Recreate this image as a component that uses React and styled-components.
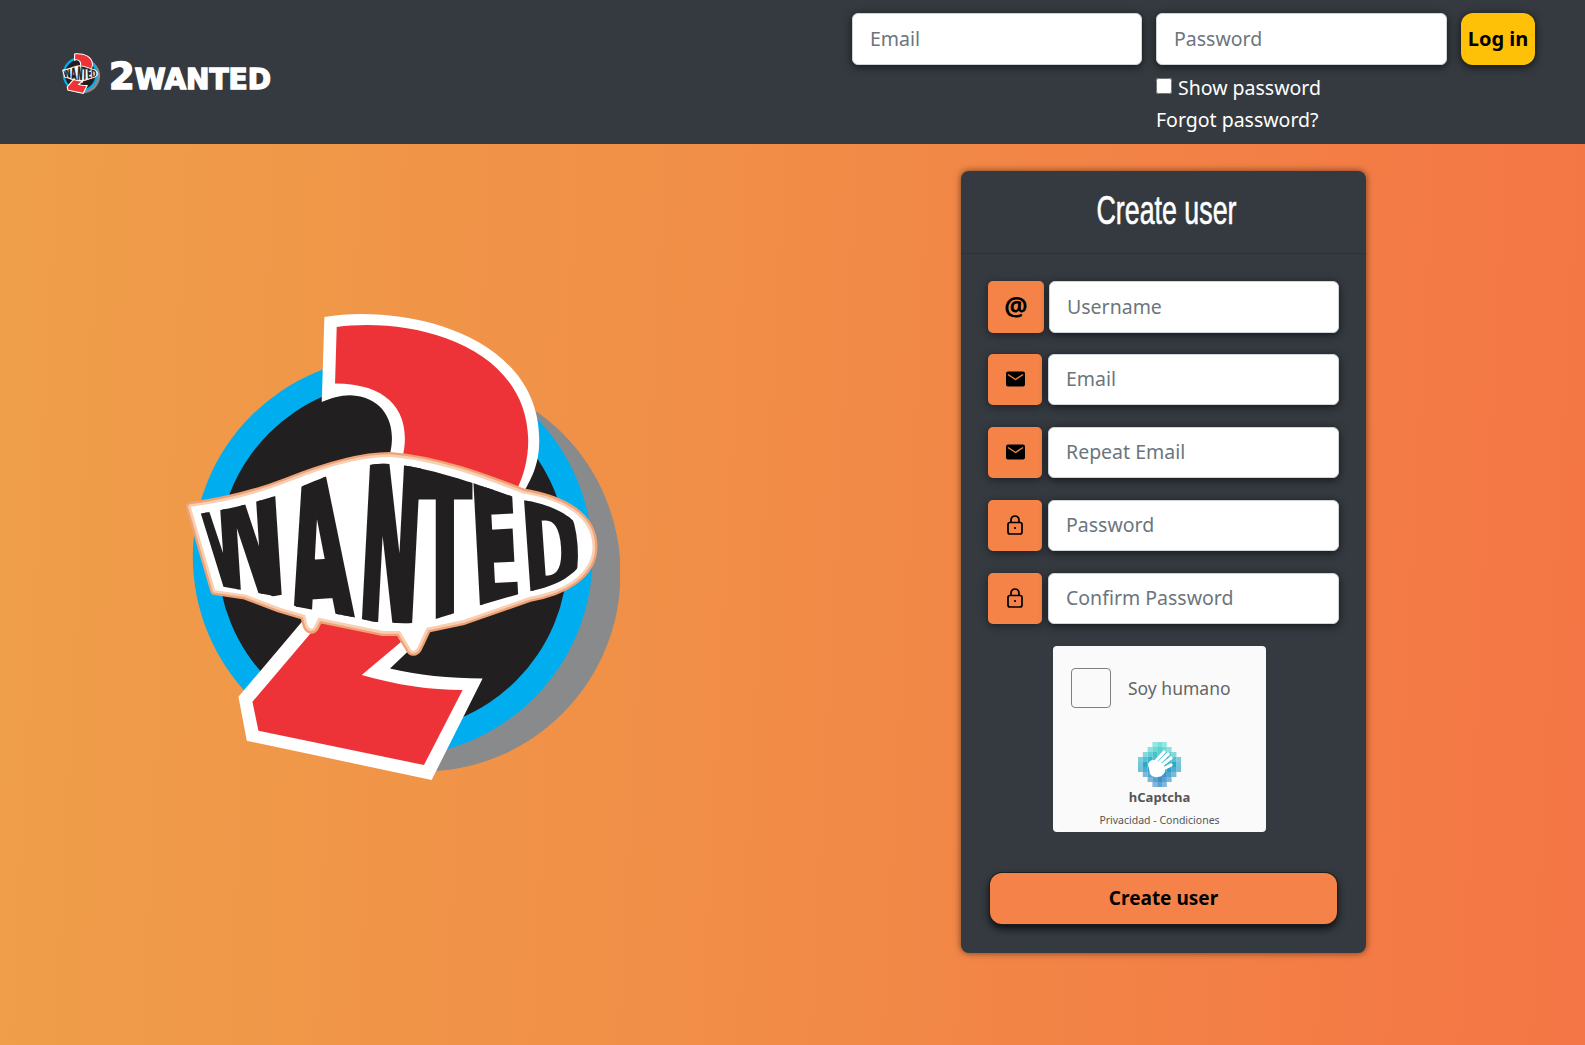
import styled, { createGlobalStyle } from 'styled-components';

const GlobalStyle = createGlobalStyle`
  * { box-sizing: border-box; }
  html, body { margin: 0; padding: 0; }
  body { font-family: "Noto Sans", "Open Sans", sans-serif; }
`;

const Page = styled.div`
  width: 100%;
  min-height: 100vh;
  display: flex;
  flex-direction: column;
  background: linear-gradient(93deg, #ef9f4a 0%, #f18e47 45%, #f47545 100%);
`;

const TopBar = styled.header`
  height: 144px;
  padding: 13px 50px 0 62px;
  background: #343a40;
  display: flex;
  justify-content: space-between;
  align-items: flex-start;
`;

const Brand = styled.a`
  display: flex;
  align-items: flex-start;
  gap: 9px;
  margin-top: 40px;
  color: #fff;
  svg { width: 38px; height: 41px; }
`;

const BrandName = styled.span`
  font-family: "DejaVu Sans", sans-serif;
  font-weight: 700;
  font-size: 28px;
  line-height: 41px;
  letter-spacing: 0;
  -webkit-text-stroke: 1.5px #fff;
  margin-top: 3px;
  span { font-size: 37px; }
`;

const LoginForm = styled.form`
  display: grid;
  grid-template-columns: 290px 291px 74px;
  column-gap: 14px;
`;

const Input = styled.input`
  width: 100%;
  height: ${p => p.$tall ? 52 : 51}px;
  padding: 0 17px 2px;
  font-family: inherit;
  font-size: 19.5px;
  color: #495057;
  background: #fff;
  border: 1px solid #ced4da;
  border-radius: 6px;
  box-shadow: 0 2px 8px rgba(0, 0, 0, 0.6);
  &::placeholder { color: #6c757d; opacity: 1; }
`;

const LoginButton = styled.button`
  height: 52px;
  padding: 0 0 2px;
  border: none;
  border-radius: 12px;
  background: #ffc107;
  color: #000;
  font-family: inherit;
  font-size: 20px;
  font-weight: 700;
  box-shadow: 0 2px 8px rgba(0, 0, 0, 0.7);
`;

const LoginLinks = styled.div`
  grid-column: 2;
  color: #fff;
  font-size: 19.5px;
`;

const ShowPassword = styled.label`
  display: flex;
  align-items: center;
  height: 32px;
  margin-top: 6px;
  input { width: 16px; height: 16px; margin: -3px 6px 0 0; }
`;

const ForgotLink = styled.a`
  display: block;
  line-height: 33px;
`;

const Main = styled.main`
  flex: 1;
  display: flex;
  align-items: flex-start;
`;

const Hero = styled.div`
  width: 961px;
  padding: 168px 0 0 185px;
  svg { display: block; width: 435px; height: 468px; }
`;

const Card = styled.section`
  width: 405px;
  margin-top: 27px;
  background: #343a40;
  border-radius: 8px;
  box-shadow: 0 0 7px rgba(0, 0, 0, 0.55);
`;

const CardHeader = styled.div`
  height: 83px;
  padding-bottom: 4px;
  display: flex;
  align-items: center;
  justify-content: center;
  border-bottom: 1px solid #2d3237;
`;

const CardTitle = styled.h1`
  margin: 0;
  font-family: "Liberation Sans", sans-serif;
  font-size: 40px;
  font-weight: 400;
  color: #fff;
  -webkit-text-stroke: 0.6px #fff;
  transform: translateX(3px) scaleX(0.67);
`;

const CardBody = styled.div`
  padding: 27px 27px 29px;
`;

const Row = styled.div`
  display: flex;
  gap: ${p => p.$first ? 5 : 6}px;
  margin-bottom: ${p => p.$first ? 21 : 22}px;
`;

const IconBox = styled.span`
  flex: none;
  width: ${p => p.$first ? 56 : 54}px;
  padding-bottom: ${p => p.$first ? 3 : 1}px;
  display: flex;
  align-items: center;
  justify-content: center;
  background: #f58348;
  border-radius: 5px;
  color: #000;
  font-size: 26px;
  font-weight: 700;
  box-shadow: 0 2px 8px rgba(0, 0, 0, 0.45);
`;

const Captcha = styled.div`
  width: 213px;
  height: 186px;
  margin: 0 0 41px 65px;
  padding: 22px 18px 0;
  background: #fafafa;
  border-radius: 4px;
  color: #666;
`;

const CaptchaTop = styled.div`
  display: flex;
  align-items: center;
  gap: 17px;
  font-size: 17.5px;
`;

const CaptchaBox = styled.span`
  width: 40px;
  height: 40px;
  border: 1px solid #808080;
  border-radius: 4px;
`;

const CaptchaBrand = styled.div`
  display: flex;
  flex-direction: column;
  align-items: center;
  margin-top: 34px;
  color: #555;
`;

const CaptchaName = styled.div`
  font-size: 13px;
  font-weight: 700;
  line-height: 20px;
`;

const CaptchaLinks = styled.div`
  font-size: 10.5px;
  line-height: 14px;
  margin-top: 6px;
  white-space: nowrap;
`;

const SubmitButton = styled.button`
  display: block;
  width: 347px;
  height: 51px;
  margin-left: 2px;
  padding: 0 0 2px;
  border: none;
  border-radius: 12px;
  background: #f58349;
  color: #000;
  font-family: inherit;
  font-size: 19px;
  font-weight: 700;
  box-shadow: 0 0 0 1px #1b1e21, 0 4px 9px rgba(0, 0, 0, 0.85);
`;

const letters = [
  { ch: 'W', x: 240, y: 890, sx: 2.55, sy: 4.7, r: -11 },
  { ch: 'A', x: 462, y: 965, sx: 2.3, sy: 6.4, r: -4 },
  { ch: 'N', x: 650, y: 985, sx: 2.15, sy: 6.9, r: 3 },
  { ch: 'T', x: 825, y: 975, sx: 2.3, sy: 6.7, r: 0 },
  { ch: 'E', x: 987, y: 935, sx: 2.05, sy: 5.2, r: -3 },
  { ch: 'D', x: 1155, y: 895, sx: 2.05, sy: 4.2, r: -4 },
];

const bannerPath = 'M62 620 C160 607 260 582 350 547 C450 507 560 470 660 470 C800 480 950 537 1060 580 C1180 600 1268 650 1268 740 C1268 823 1180 873 1080 890 L880 960 L770 983 L742 1043 C735 1055 725 1055 720 1043 L690 993 L640 993 L445 953 L432 980 C425 990 415 985 412 973 L405 945 L330 923 L225 883 L135 870 Z';
const letterClip = 'M92 640 C190 625 280 600 370 570 C450 535 540 495 640 490 C760 495 900 545 1060 600 C1170 615 1248 670 1248 740 C1248 810 1170 860 1070 875 L915 920 L770 965 L710 970 L610 965 L545 950 L380 920 L300 885 L160 860 Z';

const LogoMark = () => (
  <svg viewBox="45 35 1305 1405" aria-hidden="true">
    <defs>
      <clipPath id="letterClip"><path d={letterClip} /></clipPath>
    </defs>
    <circle cx="757" cy="820" r="595" fill="#898a8c" />
    <circle cx="668" cy="770" r="600" fill="#00aeef" />
    <circle cx="668" cy="770" r="525" fill="#221f20" />
    <path fill="#fff" d="M463 50 C700 10 1108 100 1108 420 C1108 500 1080 540 1060 580 L760 1010 L660 1105 C740 1125 840 1135 938 1135 L785 1440 L230 1322 L205 1190 L400 960 L660 460 C680 380 650 290 540 285 C510 285 480 295 455 305 Z" />
    <path fill="#ee3338" d="M500 80 C720 50 1070 130 1075 420 C1075 480 1060 530 1040 570 L700 1020 L575 1125 C680 1155 780 1170 878 1170 L762 1395 L265 1292 L247 1205 L430 990 L700 460 C720 360 680 250 495 250 Z" />
    <path d={bannerPath} fill="#f0a274" stroke="#f0a274" strokeWidth="30" strokeLinejoin="round" />
    <path d={bannerPath} fill="#f8cfb3" stroke="#f8cfb3" strokeWidth="16" strokeLinejoin="round" />
    <path d={bannerPath} fill="#fff" />
    <g clipPath="url(#letterClip)">
      {letters.map(l => (
        <text
          key={l.ch}
          transform={`translate(${l.x} ${l.y}) rotate(${l.r}) scale(${l.sx} ${l.sy})`}
          textAnchor="middle"
          fontFamily="'DejaVu Sans', sans-serif"
          fontWeight="700"
          fontSize="100"
          fill="#221f20"
          stroke="#221f20"
          strokeWidth="5"
        >
          {l.ch}
        </text>
      ))}
    </g>
  </svg>
);

const AtIcon = () => <span>@</span>;

const MailIcon = () => (
  <svg width="19" height="16" viewBox="0 0 19 16" aria-hidden="true">
    <rect width="19" height="15" y="0.5" rx="2" fill="#000" />
    <path d="M2 3.5 L9.5 8.5 L17 3.5" fill="none" stroke="#f58348" strokeWidth="1.4" />
  </svg>
);

const LockIcon = () => (
  <svg width="16" height="20" viewBox="0 0 16 20" fill="none" stroke="#000" strokeWidth="1.7" aria-hidden="true">
    <rect x="1" y="7.5" width="14" height="11.5" rx="2" />
    <path d="M4 7.5 V5 a4 4 0 0 1 8 0 V7.5" />
    <circle cx="8" cy="13" r="1.1" fill="#000" stroke="none" />
  </svg>
);

// stepped cross shape of the captcha mark, [first cell, last cell] per row
const markRows = [[3, 5], [2, 6], [1, 7], [0, 8], [0, 8], [0, 8], [1, 7], [2, 6], [3, 5]];
const markColors = ['#5fdcd2', '#55d3cf', '#45c4cc', '#36b5c9', '#2ba8c6', '#2d9fc6', '#3498ca', '#3a92cb', '#4192cc'];

const CaptchaMark = () => (
  <svg width="43" height="45" viewBox="0 0 43 45" aria-hidden="true">
    {markRows.flatMap(([from, to], y) => {
      const cells = [];
      for (let x = from; x <= to; x++) {
        cells.push(
          <rect
            key={`${x}-${y}`}
            x={x * 4.8}
            y={y * 5}
            width="4.8"
            height="5"
            fill={markColors[y]}
            opacity={x === from || x === to ? 0.65 : (x + y) % 2 ? 1 : 0.85}
          />
        );
      }
      return cells;
    })}
    <g stroke="#fff" strokeWidth="3.2" strokeLinecap="round">
      <path d="M17 20 L26 10" />
      <path d="M20 22 L30 12" />
      <path d="M23 24 L33 16" />
      <path d="M25 27 L33 23" />
    </g>
    <path d="M10 22 C12 18 15 17 18 19 L26 22 L27 30 C24 36 16 37 12 32 Z" fill="#fff" />
  </svg>
);

const fields = [
  { placeholder: 'Username', icon: <AtIcon />, first: true },
  { placeholder: 'Email', icon: <MailIcon /> },
  { placeholder: 'Repeat Email', icon: <MailIcon /> },
  { placeholder: 'Password', icon: <LockIcon /> },
  { placeholder: 'Confirm Password', icon: <LockIcon /> },
];

const App = () => {
  return (
    <Page>
      <GlobalStyle />
      <TopBar>
        <Brand>
          <LogoMark />
          <BrandName><span>2</span>WANTED</BrandName>
        </Brand>
        <LoginForm>
          <Input $tall placeholder="Email" />
          <Input $tall placeholder="Password" />
          <LoginButton type="button">Log in</LoginButton>
          <LoginLinks>
            <ShowPassword><input type="checkbox" />Show password</ShowPassword>
            <ForgotLink>Forgot password?</ForgotLink>
          </LoginLinks>
        </LoginForm>
      </TopBar>
      <Main>
        <Hero>
          <LogoMark />
        </Hero>
        <Card>
          <CardHeader>
            <CardTitle>Create user</CardTitle>
          </CardHeader>
          <CardBody>
            {fields.map(f => (
              <Row key={f.placeholder} $first={f.first}>
                <IconBox $first={f.first}>{f.icon}</IconBox>
                <Input $tall={f.first} placeholder={f.placeholder} />
              </Row>
            ))}
            <Captcha>
              <CaptchaTop>
                <CaptchaBox />
                Soy humano
              </CaptchaTop>
              <CaptchaBrand>
                <CaptchaMark />
                <CaptchaName>hCaptcha</CaptchaName>
                <CaptchaLinks>Privacidad - Condiciones</CaptchaLinks>
              </CaptchaBrand>
            </Captcha>
            <SubmitButton type="button">Create user</SubmitButton>
          </CardBody>
        </Card>
      </Main>
    </Page>
  );
};

export default App;
